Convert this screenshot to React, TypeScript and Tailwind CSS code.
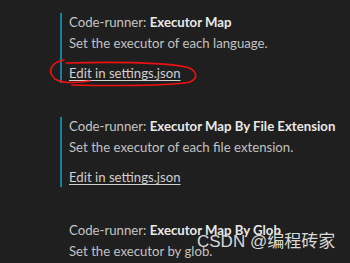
import React from "react";

const entries = [
  { name: "Executor Map", desc: "Set the executor of each language.", link: true, bar: true },
  { name: "Executor Map By File Extension", desc: "Set the executor of each file extension.", link: true, bar: true },
  { name: "Executor Map By Glob", desc: "Set the executor by glob.", link: false, bar: false },
];

export default function App() {
  return (
    <div
      className="relative w-[350px] h-[263px] overflow-hidden bg-[#1f1f1f] pl-[60px] pt-[13px]"
      style={{ fontFamily: 'Lato, "Noto Sans", sans-serif' }}
    >
      <div className="flex flex-col gap-[34px]">
        {entries.map((e) => (
          <div
            key={e.name}
            className={`h-[70px] pl-[7px] border-l-2 ${e.bar ? "border-[#1a7fa6]" : "border-transparent"} text-[13.2px]`}
          >
            <div className="leading-[18px] whitespace-nowrap">
              <span className="text-[#c5c5c5]">Code-runner: </span>
              <span className="text-[#e8e8e8] font-bold">{e.name}</span>
            </div>
            <div className="mt-[3px] leading-[18px] text-[#c2c2c2] whitespace-nowrap">{e.desc}</div>
            {e.link && (
              <div className="mt-[12px] leading-[18px] text-[#d0d0d0] underline underline-offset-2 whitespace-nowrap">
                Edit in settings.json
              </div>
            )}
          </div>
        ))}
      </div>
      <svg className="absolute left-0 top-0" width="350" height="263" viewBox="0 0 350 263" fill="none">
        <path
          d="M64 60 C52 62 46 71 55 79 C61 83 76 83 90 81 M72 85 C110 86 170 86 190 82 C199 78 197 70 186 67 C160 62 105 62 66 63"
          stroke="#ee1111"
          strokeWidth="1.6"
          strokeLinecap="round"
        />
      </svg>
      <div
        className="absolute left-[197px] top-[231px] text-[17px] leading-[22px] text-[#d8d8d8] whitespace-nowrap"
        style={{ fontFamily: '"Liberation Sans", "Noto Sans CJK SC", sans-serif' }}
      >
        CSDN @编程砖家
      </div>
    </div>
  );
}
